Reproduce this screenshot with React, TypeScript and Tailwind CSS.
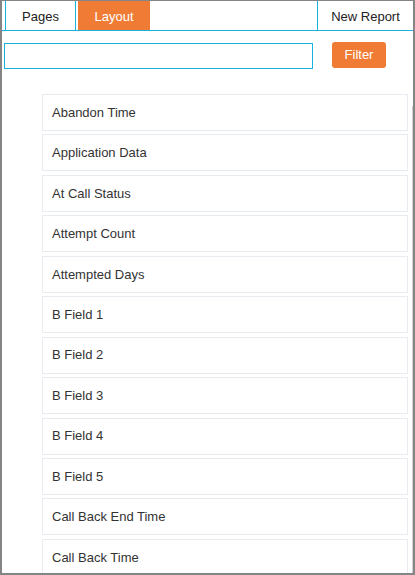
import React from "react";

const FIELDS = [
  "Abandon Time",
  "Application Data",
  "At Call Status",
  "Attempt Count",
  "Attempted Days",
  "B Field 1",
  "B Field 2",
  "B Field 3",
  "B Field 4",
  "B Field 5",
  "Call Back End Time",
  "Call Back Time",
];

export default function App() {
  return (
    <div
      className="w-[415px] h-[575px] overflow-hidden bg-white border-t border-l-2 border-r-2 border-b-2 border-[#858585] flex flex-col text-[13px] text-[#333]"
      style={{ fontFamily: '"Liberation Sans", Arial, sans-serif' }}
    >
      {/* Tabs */}
      <div className="flex h-[30px] border-b border-[#1ab2dc] shrink-0">
        <div className="ml-[3px] w-[71px] pt-[2px] border-l border-r border-[#1ab2dc] flex items-center justify-center text-[#222]">
          Pages
        </div>
        <div className="ml-[2px] w-[72px] pt-[2px] bg-[#f07b35] text-white flex items-center justify-center">
          Layout
        </div>
        <div className="ml-auto w-[96px] pt-[2px] border-l border-[#1ab2dc] flex items-center justify-center text-[#222]">
          New Report
        </div>
      </div>

      {/* Filter row */}
      <div className="flex items-start pt-[11px] pl-[2px] shrink-0">
        <input
          className="w-[309px] h-[26px] border border-[#1ab2dc] outline-none px-1 mt-[1px]"
          type="text"
        />
        <button className="ml-[19px] w-[54px] h-[26px] rounded-[3px] bg-[#f07b35] text-white">
          Filter
        </button>
      </div>

      {/* Field list */}
      <div className="flex flex-1 min-h-0 mt-[25px]">
        <div className="flex flex-col gap-[3.45px] ml-[40px] w-[366px]">
          {FIELDS.map((f) => (
            <div
              key={f}
              className="h-[37px] shrink-0 border border-[#e8ecf0] bg-white flex items-center pl-[9px] text-[#333]"
            >
              {f}
            </div>
          ))}
        </div>
        <div className="ml-auto w-px mt-[12px] bg-[#cfcfcf]" />
      </div>
    </div>
  );
}
